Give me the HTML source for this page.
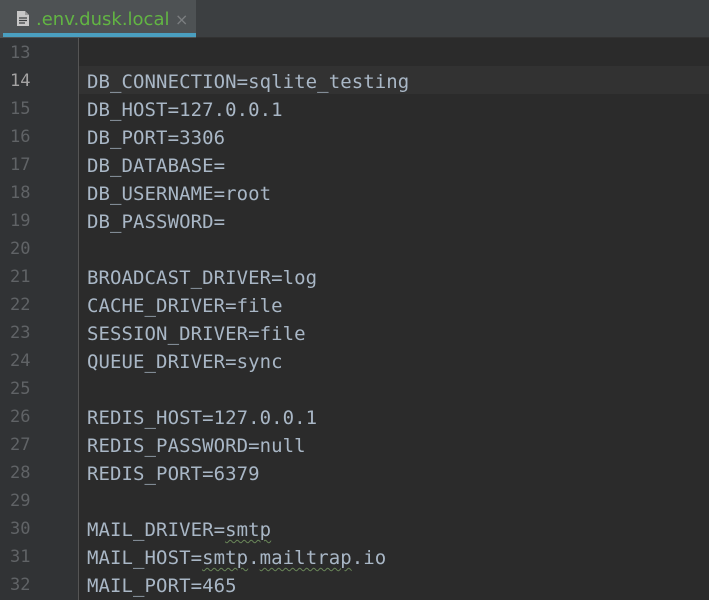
<!DOCTYPE html>
<html><head><style>
body{margin:0;width:709px;height:600px;overflow:hidden;background:#2b2b2b;font-family:"DejaVu Sans Mono","Liberation Mono",monospace;}
#top{position:absolute;left:0;top:0;width:709px;height:38px;background:#3c3f41;border-bottom:1px solid #323232;box-sizing:border-box;}
#tab{position:absolute;left:0;top:0;width:196px;height:38px;background:#4e5254;}
#tab .ul{position:absolute;left:3px;top:33px;width:193px;height:4px;background:#4a9fc0;}
#tab .name{position:absolute;left:36px;top:9px;font:18px "DejaVu Sans","Liberation Sans",sans-serif;color:#62b543;}
#tab .x{position:absolute;left:175px;top:10px;font:16px "DejaVu Sans",sans-serif;color:#7b7e80;}
#gut{position:absolute;left:0;top:38px;width:78px;height:562px;background:#313335;border-right:1px solid #555;}
.cur{position:absolute;left:79px;top:66px;width:630px;height:28px;background:#323232;}
.ln{position:absolute;left:10px;font-size:17px;color:#606366;line-height:28px;}
.c{position:absolute;left:87px;font-size:19px;color:#a9b7c6;line-height:28px;white-space:pre;letter-spacing:0.07px;}
.w{text-decoration:underline wavy #6a8759;text-decoration-thickness:1px;text-underline-offset:3px;}
</style></head><body>
<div id="top"><div id="tab">
<svg style="position:absolute;left:16px;top:10px" width="14" height="17" viewBox="0 0 14 17"><path d="M1 1h8l4 4v11H1z" fill="#c7c7c7"/><path d="M9 1v4h4" fill="#9a9a9a"/><path d="M3 8h8M3 10.5h8M3 13h6" stroke="#3c3f41" stroke-width="1.2"/></svg>
<div class="name">.env.dusk.local</div><div class="x">×</div><div class="ul"></div></div></div>
<div id="gut"></div>
<div class="cur"></div>
<div id="lines"></div>
<script>
var L=["","DB_CONNECTION=sqlite_testing","DB_HOST=127.0.0.1","DB_PORT=3306","DB_DATABASE=","DB_USERNAME=root","DB_PASSWORD=","","BROADCAST_DRIVER=log","CACHE_DRIVER=file","SESSION_DRIVER=file","QUEUE_DRIVER=sync","","REDIS_HOST=127.0.0.1","REDIS_PASSWORD=null","REDIS_PORT=6379","","MAIL_DRIVER=<span class=w>smtp</span>","MAIL_HOST=<span class=w>smtp</span>.<span class=w>mailtrap</span>.io","MAIL_PORT=465"];
var h="";for(var i=0;i<L.length;i++){var y=38+i*28;var n=13+i;
h+='<div class="ln" style="top:'+(y+1)+'px;'+(n==14?'color:#a4a3a3':'')+'">'+n+'</div><div class="c" style="top:'+(y+2)+'px">'+L[i]+'</div>';}
document.getElementById('lines').innerHTML=h;
</script>
</body></html>
